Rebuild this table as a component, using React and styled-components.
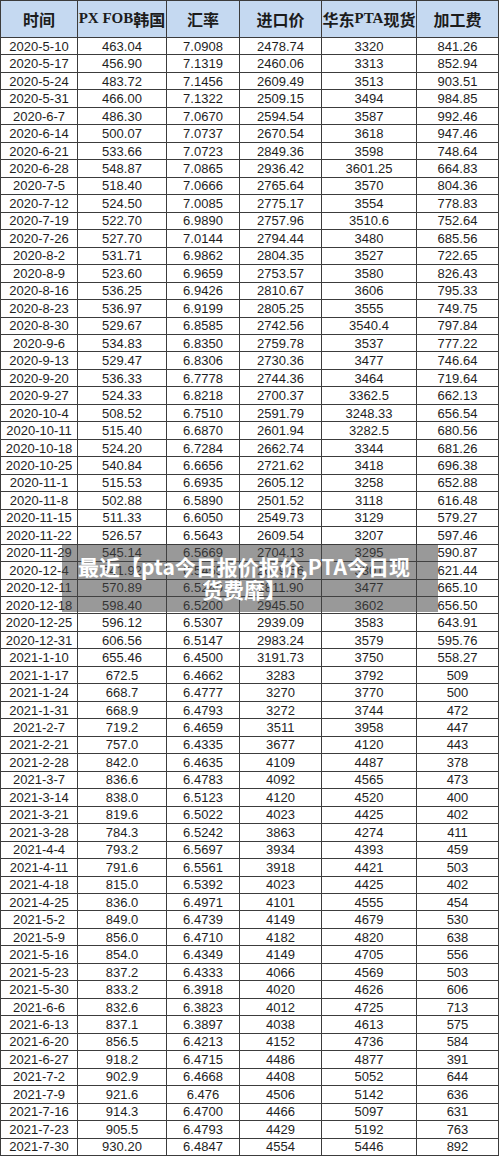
import React from "react";
import styled, { createGlobalStyle } from "styled-components";

const GlobalStyle = createGlobalStyle`
  html, body { margin: 0; padding: 0; background: #ffffff; }
  body { font-family: "Liberation Sans", Arial, "Noto Sans CJK SC", sans-serif; }
`;

const COLS = "77px 89px 73px 82px 95px 82px";

const Page = styled.div`
  position: relative;
  width: 500px;
  height: 1157px;
  overflow: hidden;
  background: #fff;
`;

const Table = styled.div`
  display: flex;
  flex-direction: column;
  width: 499px;
  border-left: 1px solid #3c3c3c;
  border-top: 1px solid #3c3c3c;
  box-sizing: border-box;
`;

const Row = styled.div`
  display: grid;
  grid-template-columns: ${COLS};
  height: ${(p) => p.$h}px;
  flex: none;
`;

const HeadCell = styled.div`
  display: flex;
  align-items: center;
  justify-content: center;
  background: #c5d9f1;
  border-right: 1px solid #3c3c3c;
  border-bottom: 1px solid #3c3c3c;
  font-family: "Liberation Serif", "Noto Sans CJK SC", serif;
  font-weight: 700;
  font-size: 15px;
  color: #1c1c1c;
  white-space: nowrap;
  overflow: visible;
  padding-bottom: 1px;
`;

const Cjk = styled.span`
  font-family: "Noto Sans CJK SC", sans-serif;
  font-weight: 700;
  font-size: 16px;
`;

const Cell = styled.div`
  display: flex;
  align-items: center;
  justify-content: center;
  border-right: 1px solid #3c3c3c;
  border-bottom: 1px solid #3c3c3c;
  font-family: "Liberation Sans", Arial, sans-serif;
  font-size: 13px;
  color: #1e1e1e;
  white-space: nowrap;
  line-height: 1;
`;

const Caption = styled.div`
  position: absolute;
  left: 62px;
  top: 545px;
  width: 376px;
  height: 67px;
  box-sizing: border-box;
  padding: 10px 18px 0 6px;
  background: rgba(70, 70, 70, 0.55);
  color: #ffffff;
  font-family: "Noto Sans CJK SC", sans-serif;
  font-weight: 700;
  font-size: 21px;
  line-height: 23px;
  text-align: center;
  word-break: break-all;
`;

const headers = [
  [<Cjk key="a">时间</Cjk>],
  ["PX FOB", <Cjk key="b">韩国</Cjk>],
  [<Cjk key="c">汇率</Cjk>],
  [<Cjk key="d">进口价</Cjk>],
  [<Cjk key="e">华东</Cjk>, "PTA", <Cjk key="f">现货</Cjk>],
  [<Cjk key="g">加工费</Cjk>],
];

const data = `2020-5-10,463.04,7.0908,2478.74,3320,841.26
2020-5-17,456.90,7.1319,2460.06,3313,852.94
2020-5-24,483.72,7.1456,2609.49,3513,903.51
2020-5-31,466.00,7.1322,2509.15,3494,984.85
2020-6-7,486.30,7.0670,2594.54,3587,992.46
2020-6-14,500.07,7.0737,2670.54,3618,947.46
2020-6-21,533.66,7.0723,2849.36,3598,748.64
2020-6-28,548.87,7.0865,2936.42,3601.25,664.83
2020-7-5,518.40,7.0666,2765.64,3570,804.36
2020-7-12,524.50,7.0085,2775.17,3554,778.83
2020-7-19,522.70,6.9890,2757.96,3510.6,752.64
2020-7-26,527.70,7.0144,2794.44,3480,685.56
2020-8-2,531.71,6.9862,2804.35,3527,722.65
2020-8-9,523.60,6.9659,2753.57,3580,826.43
2020-8-16,536.25,6.9426,2810.67,3606,795.33
2020-8-23,536.97,6.9199,2805.25,3555,749.75
2020-8-30,529.67,6.8585,2742.56,3540.4,797.84
2020-9-6,534.83,6.8350,2759.78,3537,777.22
2020-9-13,529.47,6.8306,2730.36,3477,746.64
2020-9-20,536.33,6.7778,2744.36,3464,719.64
2020-9-27,524.33,6.8218,2700.37,3362.5,662.13
2020-10-4,508.52,6.7510,2591.79,3248.33,656.54
2020-10-11,515.40,6.6870,2601.94,3282.5,680.56
2020-10-18,524.20,6.7284,2662.74,3344,681.26
2020-10-25,540.84,6.6656,2721.62,3418,696.38
2020-11-1,515.53,6.6935,2605.12,3258,652.88
2020-11-8,502.88,6.5890,2501.52,3118,616.48
2020-11-15,511.33,6.6050,2549.73,3129,579.27
2020-11-22,526.57,6.5643,2609.54,3207,597.46
2020-11-29,545.14,6.5669,2704.13,3295,590.87
2020-12-4,541.92,6.5455,2679.56,3301,621.44
2020-12-11,570.89,6.5240,2811.90,3477,665.10
2020-12-18,598.40,6.5200,2945.50,3602,656.50
2020-12-25,596.12,6.5307,2939.09,3583,643.91
2020-12-31,606.56,6.5147,2983.24,3579,595.76
2021-1-10,655.46,6.4500,3191.73,3750,558.27
2021-1-17,672.5,6.4662,3283,3792,509
2021-1-24,668.7,6.4777,3270,3770,500
2021-1-31,668.9,6.4793,3272,3744,472
2021-2-7,719.2,6.4659,3511,3958,447
2021-2-21,757.0,6.4335,3677,4120,443
2021-2-28,842.0,6.4635,4109,4487,378
2021-3-7,836.6,6.4783,4092,4565,473
2021-3-14,838.0,6.5123,4120,4520,400
2021-3-21,819.6,6.5022,4023,4425,402
2021-3-28,784.3,6.5242,3863,4274,411
2021-4-4,793.2,6.5697,3934,4393,459
2021-4-11,791.6,6.5561,3918,4421,503
2021-4-18,815.0,6.5392,4023,4425,402
2021-4-25,836.0,6.4971,4101,4555,454
2021-5-2,849.0,6.4739,4149,4679,530
2021-5-9,856.0,6.4710,4182,4820,638
2021-5-16,854.0,6.4349,4149,4705,556
2021-5-23,837.2,6.4333,4066,4569,503
2021-5-30,833.2,6.3918,4020,4626,606
2021-6-6,832.6,6.3823,4012,4725,713
2021-6-13,837.1,6.3897,4038,4613,575
2021-6-20,856.5,6.4213,4152,4736,584
2021-6-27,918.2,6.4715,4486,4877,391
2021-7-2,902.9,6.4668,4408,5052,644
2021-7-9,921.6,6.476,4506,5142,636
2021-7-16,914.3,6.4700,4466,5097,631
2021-7-23,905.5,6.4793,4429,5192,763
2021-7-30,930.20,6.4847,4554,5446,892`
  .split("\n")
  .map((l) => l.split(","));

export default function App() {
  return (
    <Page>
      <GlobalStyle />
      <Table>
        <Row $h={37}>
          {headers.map((h, i) => (
            <HeadCell key={i}>{h}</HeadCell>
          ))}
        </Row>
        {data.map((r, i) => (
          <Row key={i} $h={17.48}>
            {r.map((v, j) => (
              <Cell key={j}>{v}</Cell>
            ))}
          </Row>
        ))}
      </Table>
      <Caption>最近【pta今日报价报价,PTA今日现货费靡】</Caption>
    </Page>
  );
}
